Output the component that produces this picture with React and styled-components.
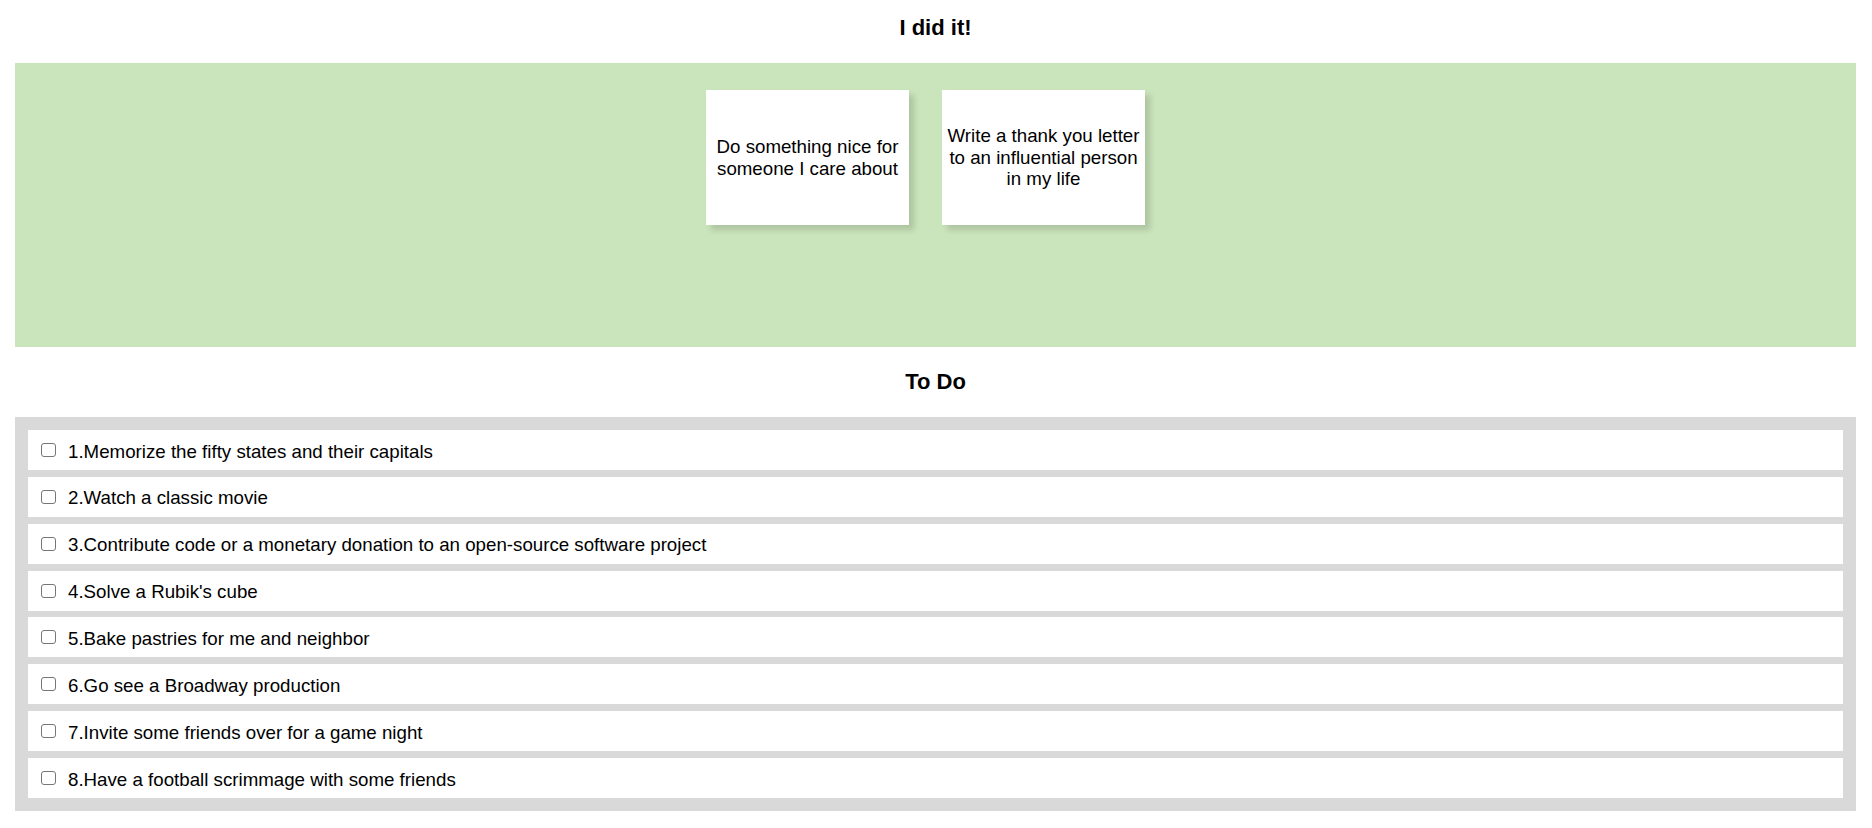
import React from 'react';
import styled, { createGlobalStyle } from 'styled-components';

const GlobalStyle = createGlobalStyle`
  html, body {
    margin: 0;
    padding: 0;
    background: #fff;
  }
  body {
    font-family: "Liberation Sans", Arial, Helvetica, sans-serif;
    color: #000;
  }
`;

const Page = styled.div`
  margin: 0 16px 0 15px;
`;

const Heading = styled.h3`
  margin: ${(p) => (p.$first ? '15px' : '22px')} 0 23px;
  font-size: 22px;
  line-height: 25px;
  font-weight: bold;
  text-align: center;
`;

// green "done" board
const DoneBoard = styled.div`
  box-sizing: border-box;
  height: 284px;
  padding: 27px 20px 0 0;
  background: #cae4bb;
  display: flex;
  justify-content: center;
  align-items: flex-start;
  gap: 33px;
`;

const Card = styled.div`
  box-sizing: border-box;
  width: 203px;
  height: 135px;
  padding: 0 4px;
  background: #fff;
  box-shadow: 5px 5px 6px rgba(0, 0, 0, 0.14);
  display: flex;
  align-items: center;
  justify-content: center;
  text-align: center;
  font-size: 18.72px;
  line-height: 21.5px;
`;

const TodoList = styled.div`
  box-sizing: border-box;
  background: #d9d9d9;
  padding: 13px 13px 13px;
  display: flex;
  flex-direction: column;
  gap: 6.86px;
`;

const TodoRow = styled.label`
  box-sizing: border-box;
  display: flex;
  align-items: center;
  height: 40px;
  padding: 3px 0 0 13px;
  background: #fff;
  font-size: 18.72px;
`;

const Check = styled.input.attrs({ type: 'checkbox' })`
  appearance: none;
  box-sizing: border-box;
  width: 15px;
  height: 14px;
  margin: -3px 12px 0 0;
  border: 1px solid #767676;
  border-radius: 3px;
  background: #fff;
  flex: none;
`;

const done = [
  'Do something nice for someone I care about',
  'Write a thank you letter to an influential person in my life',
];

const todos = [
  'Memorize the fifty states and their capitals',
  'Watch a classic movie',
  'Contribute code or a monetary donation to an open-source software project',
  "Solve a Rubik's cube",
  'Bake pastries for me and neighbor',
  'Go see a Broadway production',
  'Invite some friends over for a game night',
  'Have a football scrimmage with some friends',
];

const App = () => {
  return (
    <Page>
      <GlobalStyle />
      <Heading $first>I did it!</Heading>
      <DoneBoard>
        {done.map((text) => (
          <Card key={text}>{text}</Card>
        ))}
      </DoneBoard>
      <Heading>To Do</Heading>
      <TodoList>
        {todos.map((text, i) => (
          <TodoRow key={text}>
            <Check />
            {i + 1}.{text}
          </TodoRow>
        ))}
      </TodoList>
    </Page>
  );
};

export default App;
